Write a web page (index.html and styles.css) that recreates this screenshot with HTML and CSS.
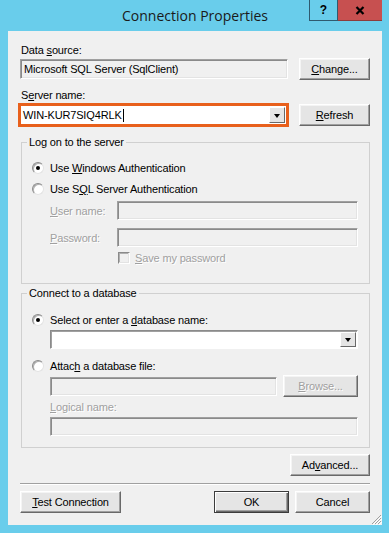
FILE: index.html
```html
<!DOCTYPE html>
<html lang="en">
<head>
  <meta charset="UTF-8">
  <title>Connection Properties</title>
  <link rel="stylesheet" href="styles.css">
</head>
<body>
  <div class="window">
    <div class="titlebar">
      <span></span>
      <div class="title">Connection Properties</div>
      <div class="controls">
        <div class="ctl help">?</div>
        <div class="ctl close">
          <svg width="10" height="9" viewBox="0 0 10 9"><path d="M1.5 1 L8.5 8 M8.5 1 L1.5 8" stroke="#000" stroke-width="2.2"/></svg>
        </div>
      </div>
    </div>

    <div class="client">
      <div class="label">Data <u>s</u>ource:</div>
      <div class="row row-top">
        <div class="textbox ds">Microsoft SQL Server (SqlClient)</div>
        <button class="btn side"><u>C</u>hange...</button>
      </div>

      <div class="label">S<u>e</u>rver name:</div>
      <div class="row row-server">
        <div class="server-combo">
          <div class="combo-text">WIN-KUR7SIQ4RLK<span class="caret"></span></div>
          <span class="drop"><i></i></span>
        </div>
        <button class="btn side"><u>R</u>efresh</button>
      </div>

      <fieldset class="group logon">
        <legend>Log on to the server</legend>
        <div class="radio-row first">
          <span class="radio on"></span><span>Use <u>W</u>indows Authentication</span>
        </div>
        <div class="radio-row second">
          <span class="radio"></span><span>Use S<u>Q</u>L Server Authentication</span>
        </div>
        <div class="field-row user">
          <span class="field-label disabled"><u>U</u>ser name:</span>
          <div class="textbox grow"></div>
        </div>
        <div class="field-row pass">
          <span class="field-label disabled"><u>P</u>assword:</span>
          <div class="textbox grow"></div>
        </div>
        <div class="check-row">
          <span class="checkbox"></span><span class="disabled"><u>S</u>ave my password</span>
        </div>
      </fieldset>

      <fieldset class="group db">
        <legend>Connect to a database</legend>
        <div class="radio-row first">
          <span class="radio on"></span><span>Select or enter a <u>d</u>atabase name:</span>
        </div>
        <div class="field-row combo-row">
          <div class="combo">
            <span class="drop"><i></i></span>
          </div>
        </div>
        <div class="radio-row attach">
          <span class="radio"></span><span>Attac<u>h</u> a database file:</span>
        </div>
        <div class="field-row file-row">
          <div class="textbox file"></div>
          <button class="btn browse" disabled><u>B</u>rowse...</button>
        </div>
        <div class="field-row logical-label">
          <span class="disabled"><u>L</u>ogical name:</span>
        </div>
        <div class="field-row logical">
          <div class="textbox grow"></div>
        </div>
      </fieldset>

      <div class="row row-advanced">
        <button class="btn advanced">Ad<u>v</u>anced...</button>
      </div>

      <div class="separator"></div>

      <div class="row row-bottom">
        <button class="btn test"><u>T</u>est Connection</button>
        <div class="dialog-buttons">
          <button class="btn dlg default">OK</button>
          <button class="btn dlg">Cancel</button>
        </div>
      </div>

      <svg class="grip" width="12" height="12" viewBox="0 0 12 12">
        <path d="M11 2 L2 11 M11 5 L5 11 M11 8 L8 11" stroke="#a0a0a0" stroke-width="1"/>
        <path d="M12 3 L3 12 M12 6 L6 12 M12 9 L9 12" stroke="#fff" stroke-width="1"/>
      </svg>
    </div>
  </div>
</body>
</html>
```

FILE: styles.css
```css
body {
  margin: 0;
  font-family: "Liberation Sans", Arial, sans-serif;
  font-size: 11px;
  letter-spacing: -0.15px;
  color: #000;
}
u {
  text-decoration: underline;
  text-underline-offset: 1px;
}
.window {
  width: 389px;
  height: 533px;
  box-sizing: border-box;
  padding: 0 7px 8px 8px;
  background: #69cdeb;
  display: flex;
  flex-direction: column;
}
.titlebar {
  height: 31px;
  display: grid;
  grid-template-columns: 1fr auto 1fr;
}
.title {
  align-self: center;
  font-family: "Open Sans", sans-serif;
  font-size: 14px;
  letter-spacing: 0;
  color: #1a1a1a;
  padding-bottom: 1px;
}
.controls {
  justify-self: end;
  align-self: start;
  display: flex;
}
.ctl {
  height: 21px;
  box-sizing: border-box;
  display: flex;
  align-items: center;
  justify-content: center;
}
.help {
  width: 29px;
  border: 1px solid #2f5b70;
  border-top: 0;
  font-weight: bold;
  font-size: 12px;
  letter-spacing: 0;
}
.close {
  width: 44px;
  background: #c75050;
  border-bottom: 1px solid #8d3c3c;
}

.client {
  flex: 1;
  position: relative;
  box-sizing: border-box;
  padding: 13px 12px 12px;
  background: #f0f0f0;
}
.label {
  height: 13px;
  line-height: 13px;
  padding-left: 1px;
}
.row {
  display: flex;
  justify-content: space-between;
  align-items: center;
}
.row-top {
  height: 22px;
  margin: 1px 0 9px;
}
.row-server {
  height: 24px;
  margin-top: 1px;
}

.textbox {
  box-sizing: border-box;
  height: 19px;
  line-height: 17px;
  padding-left: 3px;
  background: #f0f0f0;
  border: 1px solid;
  border-color: #a0a0a0 #fff #fff #a0a0a0;
  box-shadow: inset 1px 1px 0 #8a8a8a, inset -1px -1px 0 #e3e3e3;
}
.ds {
  width: 268px;
  height: 20px;
  line-height: 18px;
}
.grow {
  flex: 1;
}

.btn {
  box-sizing: border-box;
  height: 22px;
  padding: 0;
  font: inherit;
  letter-spacing: inherit;
  color: #000;
  background: #e5e5e5;
  border: 1px solid;
  border-color: #fff #696969 #696969 #fff;
  box-shadow: inset -1px -1px 0 #a0a0a0, inset 1px 1px 0 #f4f4f4;
}
.side {
  width: 71px;
}
.btn.default {
  border-color: #3c3c3c;
  box-shadow: inset 1px 1px 0 #fff, inset -1px -1px 0 #696969, inset -2px -2px 0 #a0a0a0;
}
.btn:disabled {
  color: #a0a0a0;
  text-shadow: 1px 1px 0 #fff;
}

.server-combo {
  box-sizing: border-box;
  width: 271px;
  height: 24px;
  margin-left: -2px;
  border: 3px solid #e8601c;
  background: #fff;
  display: flex;
  align-items: center;
  justify-content: space-between;
  padding-right: 1px;
}
.combo-text {
  padding-left: 2px;
  display: flex;
  align-items: center;
}
.caret {
  display: inline-block;
  width: 1px;
  height: 13px;
  background: #000;
  margin-left: 1px;
}
.drop {
  box-sizing: border-box;
  width: 16px;
  height: 16px;
  background: #e5e5e5;
  border: 1px solid;
  border-color: #fff #696969 #696969 #fff;
  display: flex;
  align-items: center;
  justify-content: center;
}
.drop i {
  width: 0;
  height: 0;
  border-left: 3.5px solid transparent;
  border-right: 3.5px solid transparent;
  border-top: 4px solid #000;
  margin-top: 1px;
}

.group {
  box-sizing: border-box;
  width: 349px;
  margin: 9px 0 0 1px;
  padding: 0 11px 0 0;
  border: 1px solid #d0d0d0;
  min-width: 0;
}
.group legend {
  margin-left: 5px;
  padding: 0 2px;
  line-height: 13px;
}
.logon {
  padding-bottom: 19px;
}
.db {
  margin-top: 3px;
  padding-bottom: 11px;
}

.radio-row {
  height: 16px;
  display: flex;
  align-items: center;
  gap: 6px;
  padding-left: 10px;
}
.radio-row.first {
  margin-top: 11px;
}
.db .radio-row.first {
  margin-top: 12px;
}
.radio-row.second {
  margin-top: 5px;
}
.radio-row.attach {
  margin-top: 9px;
}
.radio {
  box-sizing: border-box;
  width: 12px;
  height: 12px;
  border-radius: 50%;
  background: #fff;
  border: 1px solid;
  border-color: #8a8a8a #e3e3e3 #e3e3e3 #8a8a8a;
  box-shadow: inset 1px 1px 0 #b0b0b0;
  display: flex;
  align-items: center;
  justify-content: center;
}
.radio.on::after {
  content: "";
  width: 4px;
  height: 4px;
  border-radius: 50%;
  background: #000;
}

.field-row {
  display: flex;
  align-items: center;
  padding-left: 28px;
}
.field-label {
  width: 67px;
}
.disabled {
  color: #a0a0a0;
  text-shadow: 1px 1px 0 #fff;
}
.user {
  margin-top: 4px;
}
.pass {
  margin-top: 8px;
}
.check-row {
  margin-top: 4px;
  height: 13px;
  display: flex;
  align-items: center;
  gap: 5px;
  padding-left: 96px;
}
.checkbox {
  box-sizing: border-box;
  width: 12px;
  height: 12px;
  background: #f0f0f0;
  border: 1px solid;
  border-color: #8a8a8a #fff #fff #8a8a8a;
  box-shadow: inset -1px -1px 0 #e3e3e3, inset 1px 1px 0 #b0b0b0;
}

.combo-row {
  margin-top: 2px;
}
.combo {
  flex: 1;
  box-sizing: border-box;
  height: 19px;
  background: #fff;
  border: 1px solid;
  border-color: #8a8a8a #fff #fff #8a8a8a;
  box-shadow: inset 1px 1px 0 #a0a0a0;
  display: flex;
  justify-content: flex-end;
  align-items: center;
  padding-right: 1px;
}
.combo .drop {
  height: 15px;
}
.file-row {
  margin-top: 1px;
  height: 22px;
  gap: 6px;
}
.file {
  width: 227px;
}
.browse {
  width: 75px;
}
.logical-label {
  margin-top: 4px;
  height: 13px;
  line-height: 13px;
}
.logical {
  margin-top: 3px;
}

.row-advanced {
  margin-top: 6px;
  justify-content: flex-end;
}
.advanced {
  width: 80px;
}
.separator {
  margin-top: 7px;
  border-top: 1px solid #a0a0a0;
  border-bottom: 1px solid #fff;
}
.row-bottom {
  margin-top: 6px;
}
.test {
  width: 101px;
}
.dialog-buttons {
  display: flex;
  gap: 6px;
}
.dlg {
  width: 75px;
}
.grip {
  position: absolute;
  right: 0;
  bottom: 0;
}
```
